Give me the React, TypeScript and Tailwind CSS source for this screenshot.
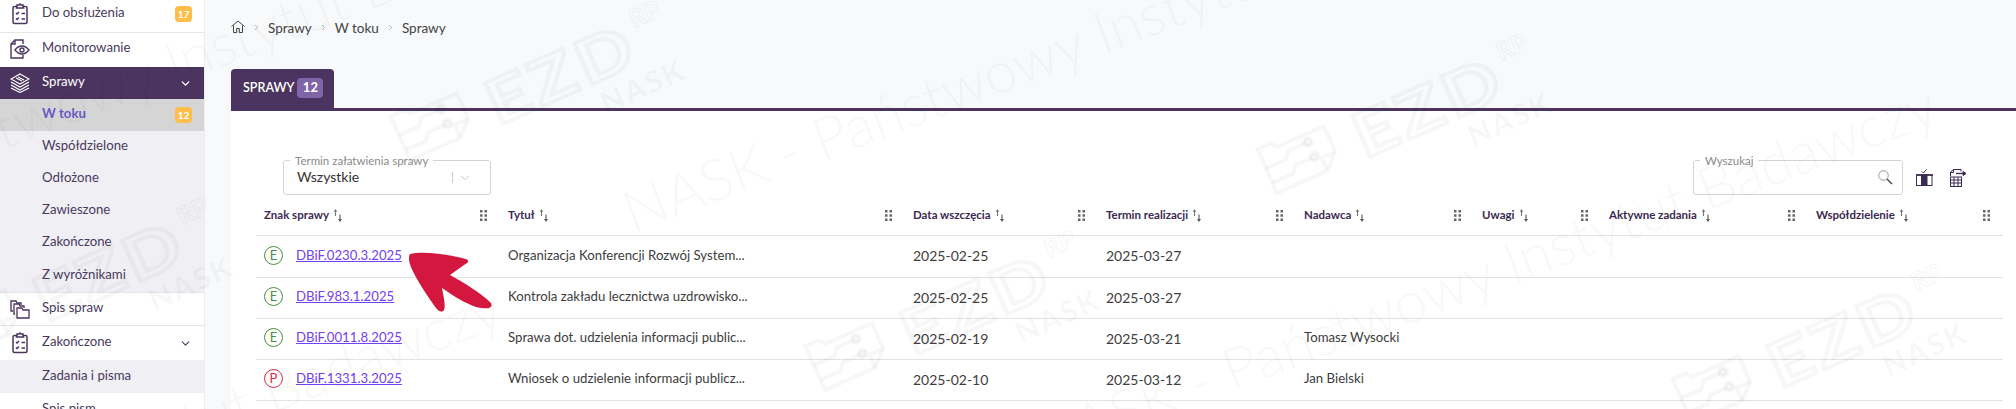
import { ChevronDown, ChevronRight } from "lucide-react";

const grid = "grid grid-cols-[244px_405px_193px_198px_178px_127px_207px_195px]";

const columns = [
  "Znak sprawy",
  "Tytuł",
  "Data wszczęcia",
  "Termin realizacji",
  "Nadawca",
  "Uwagi",
  "Aktywne zadania",
  "Współdzielenie",
];

const rows = [
  { kind: "E", sign: "DBiF.0230.3.2025", title: "Organizacja Konferencji Rozwój System...", start: "2025-02-25", end: "2025-03-27", sender: "", h: "h-[42px]" },
  { kind: "E", sign: "DBiF.983.1.2025", title: "Kontrola zakładu lecznictwa uzdrowisko...", start: "2025-02-25", end: "2025-03-27", sender: "", h: "h-[41px]" },
  { kind: "E", sign: "DBiF.0011.8.2025", title: "Sprawa dot. udzielenia informacji public...", start: "2025-02-19", end: "2025-03-21", sender: "Tomasz Wysocki", h: "h-[41px]" },
  { kind: "P", sign: "DBiF.1331.3.2025", title: "Wniosek o udzielenie informacji publicz...", start: "2025-02-10", end: "2025-03-12", sender: "Jan Bielski", h: "h-[41px]" },
];

const lines = [
  { x: -294, y: 270 },
  { x: 635, y: 240 },
  { x: 1045, y: 470 },
  { x: -390, y: 673 },
];

const logos = [
  { x: 410, y: 160 },
  { x: 825, y: 390 },
  { x: 1277, y: 193 },
  { x: 1692, y: 423 },
  { x: -42, y: 357 },
  { x: 862, y: -37 },
  { x: 1729, y: -4 },
];

function ClipboardIcon() {
  return (
    <svg width="18" height="22" viewBox="0 0 18 22" fill="none" stroke="#4b3560" strokeWidth="1.5">
      <rect x="2" y="3.5" width="14" height="17" rx="1.5" />
      <path d="M6 3.5V2h2l1-1 1 1h2v1.5l.5 1.5h-7z" fill="#fff" />
      <path d="M5 10l1 1 2-2M5 15.500l1 1 2-2M10.500 10.500H14M10.500 16H14" />
    </svg>
  );
}

function MonitorIcon() {
  return (
    <svg width="20" height="20" viewBox="0 0 20 20" fill="none" stroke="#4b3560" strokeWidth="1.4">
      <path d="M13 5V1H5L1 5v14h12v-3" />
      <path d="M1 5h4V1" />
      <path d="M5 11c2-3 4-4 7-4s5 1.500 7 4c-2 2.500-4 4-7 4s-5-1.500-7-4z" fill="#fff" />
      <circle cx="12" cy="11" r="2" />
    </svg>
  );
}

function LayersIcon() {
  return (
    <svg width="20" height="20" viewBox="0 0 20 20" fill="none" stroke="#fff" strokeWidth="1.1">
      <path d="M10 1l9 5-9 5-9-5z" />
      <path d="M1 9l9 5 9-5M1 12l9 5 9-5M1 15l9 4.500 9-4.500" />
      <path d="M6 5l6 3M8 4l6 3" />
    </svg>
  );
}

function FoldersIcon() {
  return (
    <svg width="20" height="19" viewBox="0 0 20 19" fill="none" stroke="#4b3560" strokeWidth="1.3">
      <path d="M3 11H1V1h5l1 2h4v2" />
      <path d="M5 14H4V4h5l1 2h4v2" />
      <path d="M7 18V8h5l1 2h6v8z" fill="#fff" />
    </svg>
  );
}

function HomeIcon() {
  return (
    <svg width="14" height="13" viewBox="0 0 14 13" fill="none" stroke="#444" strokeWidth="1">
      <path d="M.5 6.500L7 1l6.500 5.500M2.500 5.500V12.500h3.200V8.500h2.600V12.500h3.200V5.500" />
    </svg>
  );
}

function SortIcon() {
  return (
    <svg width="10" height="13" viewBox="0 0 10 13" className="ml-[4px] shrink-0">
      <path d="M2.500 7V2" stroke="#777" strokeWidth="1.100" />
      <path d="M.7 2.800L2.500 0l1.800 2.800z" fill="#777" />
      <path d="M7 5.500V11" stroke="#555" strokeWidth="1.100" />
      <path d="M5 10L7 13l2-3z" fill="#555" />
    </svg>
  );
}

function GripIcon() {
  return (
    <svg width="7" height="11" viewBox="0 0 7 11" fill="#666">
      <rect width="2.500" height="2.500" />
      <rect x="4.500" width="2.500" height="2.500" />
      <rect y="4.250" width="2.500" height="2.500" />
      <rect x="4.500" y="4.250" width="2.500" height="2.500" />
      <rect y="8.500" width="2.500" height="2.500" />
      <rect x="4.500" y="8.500" width="2.500" height="2.500" />
    </svg>
  );
}

function SearchIcon() {
  return (
    <svg width="15" height="15" viewBox="0 0 15 15" fill="none">
      <circle cx="5.500" cy="5.500" r="4.800" stroke="#999" strokeWidth="1" />
      <path d="M9 9l5 5" stroke="#555" strokeWidth="1.600" />
    </svg>
  );
}

function ColumnsIcon() {
  return (
    <svg width="17" height="17" viewBox="0 0 17 17" fill="none" stroke="#3b2a52" strokeWidth="1">
      <path d="M6 2.500l1.500 1.500L10.500 .5" />
      <rect x=".5" y="6" width="15.500" height="10.500" />
      <rect x="5.500" y="6" width="5.500" height="10.500" fill="#3b2a52" />
      <path d="M0 6h17" strokeWidth="1.600" />
    </svg>
  );
}

function ExportIcon() {
  return (
    <svg width="18" height="18" viewBox="0 0 18 18" fill="none" stroke="#3b2a52" strokeWidth="1">
      <path d="M1.500 7V3l3-2.500H12v2" />
      <path d="M1.500 3.500h3v-3" />
      <path d="M7 4.500h9" strokeWidth="1.300" />
      <path d="M14 2.500l3 2-3 2z" fill="#3b2a52" />
      <rect x="1.500" y="8" width="11" height="9.500" />
      <path d="M1.500 11h11M1.500 14h11M5 8v9.500M9 8v9.500" />
    </svg>
  );
}

function Badge({ children }: { children: string }) {
  return (
    <span className="ml-auto mr-[12px] flex h-[16px] w-[17px] items-center justify-center rounded-[4px] bg-[#ffbd4a] text-[10px] font-bold text-white">
      {children}
    </span>
  );
}

function MenuItem({ icon, label, className, badge, chevron }: { icon: React.ReactNode; label: string; className: string; badge?: string; chevron?: boolean }) {
  return (
    <div className={`flex items-center bg-white text-[#4b3a60] ${className}`}>
      <div className="flex w-[42px] shrink-0 justify-center pr-[2px]">{icon}</div>
      <span className="pb-[2px]">{label}</span>
      {badge && <Badge>{badge}</Badge>}
      {chevron && <ChevronDown size={13} strokeWidth={2} className="ml-auto mr-[12px]" />}
    </div>
  );
}

function SubItem({ label, className = "h-[32px]" }: { label: string; className?: string }) {
  return <div className={`flex items-center pb-[2px] pl-[42px] text-[#4b3a60] ${className}`}>{label}</div>;
}

function Sidebar() {
  return (
    <aside className="w-[205px] shrink-0 overflow-hidden border-r border-[#ececef] bg-white text-[13.200px]">
      <MenuItem icon={<ClipboardIcon />} label="Do obsłużenia" badge="17" className="h-[33px] border-b border-[#e6e6e6] pb-[4px]" />
      <MenuItem icon={<MonitorIcon />} label="Monitorowanie" className="h-[34px] pb-[2px]" />
      <div className="flex h-[32px] items-center bg-[#4b3560] text-white">
        <div className="flex w-[42px] shrink-0 justify-center pr-[3px]">
          <LayersIcon />
        </div>
        <span className="pb-[2px]">Sprawy</span>
        <ChevronDown size={13} strokeWidth={2.500} className="ml-auto mr-[12px]" />
      </div>
      <div className="bg-[#efeff4]">
        <div className="flex h-[32px] items-center bg-[#d5d5d5] pl-[42px] font-bold text-[#6a58c8]">
          <span className="pb-[2px]">W toku</span>
          <Badge>12</Badge>
        </div>
        <SubItem label="Współdzielone" />
        <SubItem label="Odłożone" />
        <SubItem label="Zawieszone" />
        <SubItem label="Zakończone" />
        <SubItem label="Z wyróżnikami" className="h-[34px] border-b border-[#e6e6e6]" />
      </div>
      <MenuItem icon={<FoldersIcon />} label="Spis spraw" className="h-[33px] border-b border-[#e6e6e6]" />
      <MenuItem icon={<ClipboardIcon />} label="Zakończone" chevron className="h-[34px]" />
      <SubItem label="Zadania i pisma" className="h-[33px] bg-[#efeff4]" />
      <SubItem label="Spis pism" className="h-[33px]" />
    </aside>
  );
}

function Field({ label, children, className }: { label: string; children: React.ReactNode; className: string }) {
  return (
    <div className={`relative flex h-[35px] items-center rounded-[3px] border border-[#d4d4d4] bg-white ${className}`}>
      <span className="absolute left-[6px] top-[-7px] bg-white px-[5px] text-[11.500px] leading-[13px] text-[#8a8a8a]">{label}</span>
      {children}
    </div>
  );
}

function Watermark() {
  return (
    <div className="pointer-events-none absolute inset-0 overflow-hidden">
      {lines.map((l) => (
        <span
          key={l.x}
          className="absolute origin-bottom-left -rotate-[20.800deg] whitespace-nowrap text-[58px] font-light leading-none text-black/[0.028]"
          style={{ left: l.x, top: l.y - 58 }}
        >
          NASK - Państwowy Instytut Badawczy
        </span>
      ))}
      {logos.map((l) => (
        <div key={l.x} className="absolute h-0 w-0 origin-top-left -rotate-[24deg]" style={{ left: l.x, top: l.y }}>
          <svg width="76" height="58" viewBox="0 0 76 58" fill="none" stroke="#000" strokeOpacity="0.03" strokeWidth="4" className="absolute left-[-3px] top-[-55px]">
            <path d="M3 55V7h14l5 6h51v28L58 55z" />
            <path d="M58 55V41h15" />
            <path d="M3 28h22l6-7h18M3 44h22l6-7h18" />
            <circle cx="52" cy="21" r="4" fill="#000" fillOpacity="0.03" />
            <circle cx="52" cy="37" r="4" fill="#000" fillOpacity="0.03" />
          </svg>
          <span className="absolute left-[94px] top-[-50px] origin-left scale-x-[1.2] text-[62px] font-bold leading-none tracking-[4px] text-transparent [-webkit-text-stroke:4px_rgba(0,0,0,0.03)]">
            EZD
          </span>
          <span className="absolute left-[258px] top-[-51px] text-[25px] font-bold leading-none text-transparent [-webkit-text-stroke:2px_rgba(0,0,0,0.03)]">
            RP
          </span>
          <span className="absolute left-[198px] top-[11px] text-[30px] font-black leading-none tracking-[2px] text-black/[0.03]">NASK</span>
        </div>
      ))}
    </div>
  );
}

function Arrow() {
  return (
    <svg width="520" height="209" viewBox="0 0 520 209" className="pointer-events-none absolute left-[250px] top-[200px]">
      <path
        d="M160 54C175 50 205 56 216 59C220 61 218 63 214 65L200 75C215 83 232 94 241 103C243 107 240 109 232 108C220 107 202 95 192 88C193 95 196 104 194 110C192 113 188 111 186 108C176 94 160 70 159 60C159 57 159 55 160 54Z"
        fill="#d4173f"
      />
    </svg>
  );
}

export default function App() {
  return (
    <div className="relative flex h-[409px] w-full overflow-hidden bg-[#f8f9fb] font-['Lato',sans-serif] text-[13.200px]">
      <Sidebar />
      <main className="min-w-0 flex-1 pl-[26px]">
        <nav className="flex h-[69px] items-start gap-[7px] pt-[20px] text-[13.500px] text-[#444]">
          <HomeIcon />
          <ChevronRight size={9} className="mt-[3px] text-[#999]" />
          <span className="leading-[16px]">Sprawy</span>
          <ChevronRight size={9} className="mt-[3px] text-[#999]" />
          <span className="leading-[16px]">W toku</span>
          <ChevronRight size={9} className="mt-[3px] text-[#999]" />
          <span className="leading-[16px]">Sprawy</span>
        </nav>

        <div className="border-b-[3px] border-[#4b3560]">
          <div className="-mb-[3px] flex h-[42px] w-[103px] items-start rounded-t-[4px] bg-[#4b3560] pl-[12px] pt-[9px] text-white">
            <span className="text-[12.500px] font-semibold leading-[20px]">SPRAWY</span>
            <span className="ml-[3px] flex h-[20px] w-[26px] items-center justify-center rounded-[4px] bg-[#7f65a8] text-[13px] font-bold">12</span>
          </div>
        </div>

        <section className="h-[298px] bg-white pl-[25px] pr-[13px] pt-[49px]">
          <div className="flex items-center">
            <Field label="Termin załatwienia sprawy" className="ml-[27px] w-[208px]">
              <span className="pb-[3px] pl-[13px] text-[14px] text-[#333]">Wszystkie</span>
              <span className="ml-auto h-[11px] w-px bg-[#ccc]" />
              <ChevronDown size={14} strokeWidth={1.500} className="ml-[5px] mr-[18px] text-[#bbb]" />
            </Field>
            <Field label="Wyszukaj" className="ml-auto w-[210px] justify-end pr-[9px]">
              <SearchIcon />
            </Field>
            <div className="ml-[13px] mr-[36px] flex items-center gap-[16px]">
              <ColumnsIcon />
              <ExportIcon />
            </div>
          </div>

          <div className={`${grid} h-[41px] items-center border-b border-[#e2e2e2] text-[11.500px] font-bold text-[#3b2a52]`}>
            {columns.map((c) => (
              <div key={c} className="flex items-center pl-[8px] pr-[13px]">
                <span>{c}</span>
                <SortIcon />
                <span className="ml-auto">
                  <GripIcon />
                </span>
              </div>
            ))}
          </div>

          {rows.map((r) => (
            <div key={r.sign} className={`${grid} ${r.h} items-center border-b border-[#e2e2e2] pb-[2px] text-[#3d3d3d]`}>
              <div className="flex items-center pl-[8px]">
                <span
                  className={`flex h-[19px] w-[19px] items-center justify-center rounded-full border-[1.500px] text-[13px] leading-none ${
                    r.kind === "E" ? "border-[#4a8f3c] text-[#4a8f3c]" : "border-[#dc2a4a] text-[#dc2a4a]"
                  }`}
                >
                  {r.kind}
                </span>
                <a className="ml-[13px] text-[#7340f2] underline">{r.sign}</a>
              </div>
              <div className="pl-[8px]">{r.title}</div>
              <div className="pl-[8px] text-[14px]">{r.start}</div>
              <div className="pl-[8px] text-[14px]">{r.end}</div>
              <div className="pl-[8px]">{r.sender}</div>
              <div />
              <div />
              <div />
            </div>
          ))}
        </section>
      </main>
      <Watermark />
      <Arrow />
    </div>
  );
}
